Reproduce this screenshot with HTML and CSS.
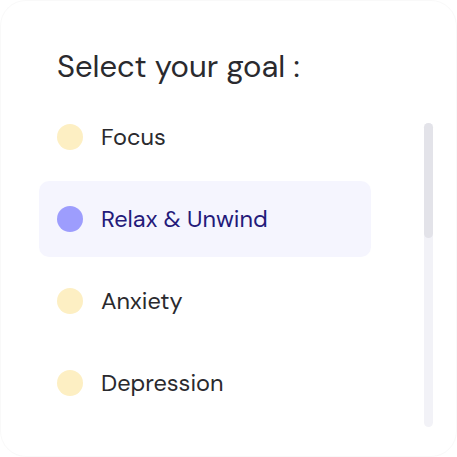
FILE: index.html
```html
<!DOCTYPE html>
<html>
<head>
<meta charset="utf-8">
<link rel="stylesheet" href="styles.css">
</head>
<body>
<div class="card">
  <h1 class="title">Select your goal :</h1>
  <div class="body">
    <ul class="list">
      <li class="item"><span class="dot"></span><span class="label">Focus</span></li>
      <li class="item selected"><span class="dot"></span><span class="label">Relax &amp; Unwind</span></li>
      <li class="item"><span class="dot"></span><span class="label">Anxiety</span></li>
      <li class="item"><span class="dot"></span><span class="label">Depression</span></li>
    </ul>
    <div class="scrollbar"><div class="thumb"></div></div>
  </div>
</div>
</body>
</html>
```
FILE: styles.css
```css
html, body {
  margin: 0;
  padding: 0;
  background: #ffffff;
}
.card {
  box-sizing: border-box;
  width: 457px;
  height: 457px;
  border: 1px solid #f9f9f9;
  border-radius: 26px;
  background: #ffffff;
  padding: 0 0 0 38px;
  font-family: "DM Sans", "Inter", "Liberation Sans", sans-serif;
}
.title {
  margin: 0;
  padding: 46px 0 0 18px;
  height: 52px;
  font-size: 31px;
  font-weight: 400;
  color: #2a2a2e;
  line-height: 40px;
}
.body {
  display: flex;
  align-items: flex-start;
}
.list {
  list-style: none;
  margin: 0;
  padding: 0;
  width: 332px;
  display: flex;
  flex-direction: column;
  gap: 6px;
}
.item {
  height: 76px;
  display: flex;
  align-items: center;
  padding-left: 18px;
  border-radius: 10px;
  font-size: 23.5px;
  color: #2a2a2e;
}
.dot {
  width: 26px;
  height: 26px;
  border-radius: 50%;
  background: #fdefc3;
  margin-right: 18px;
  flex: none;
}
.selected {
  background: #f5f5fe;
  color: #241a7a;
}
.selected .dot {
  background: #9d9dfd;
}
.scrollbar {
  margin-left: 53px;
  margin-top: 24px;
  width: 9px;
  height: 304px;
  border-radius: 5px;
  background: #f2f2f7;
}
.thumb {
  height: 115px;
  border-radius: 5px;
  background: #e3e3e9;
}
```
